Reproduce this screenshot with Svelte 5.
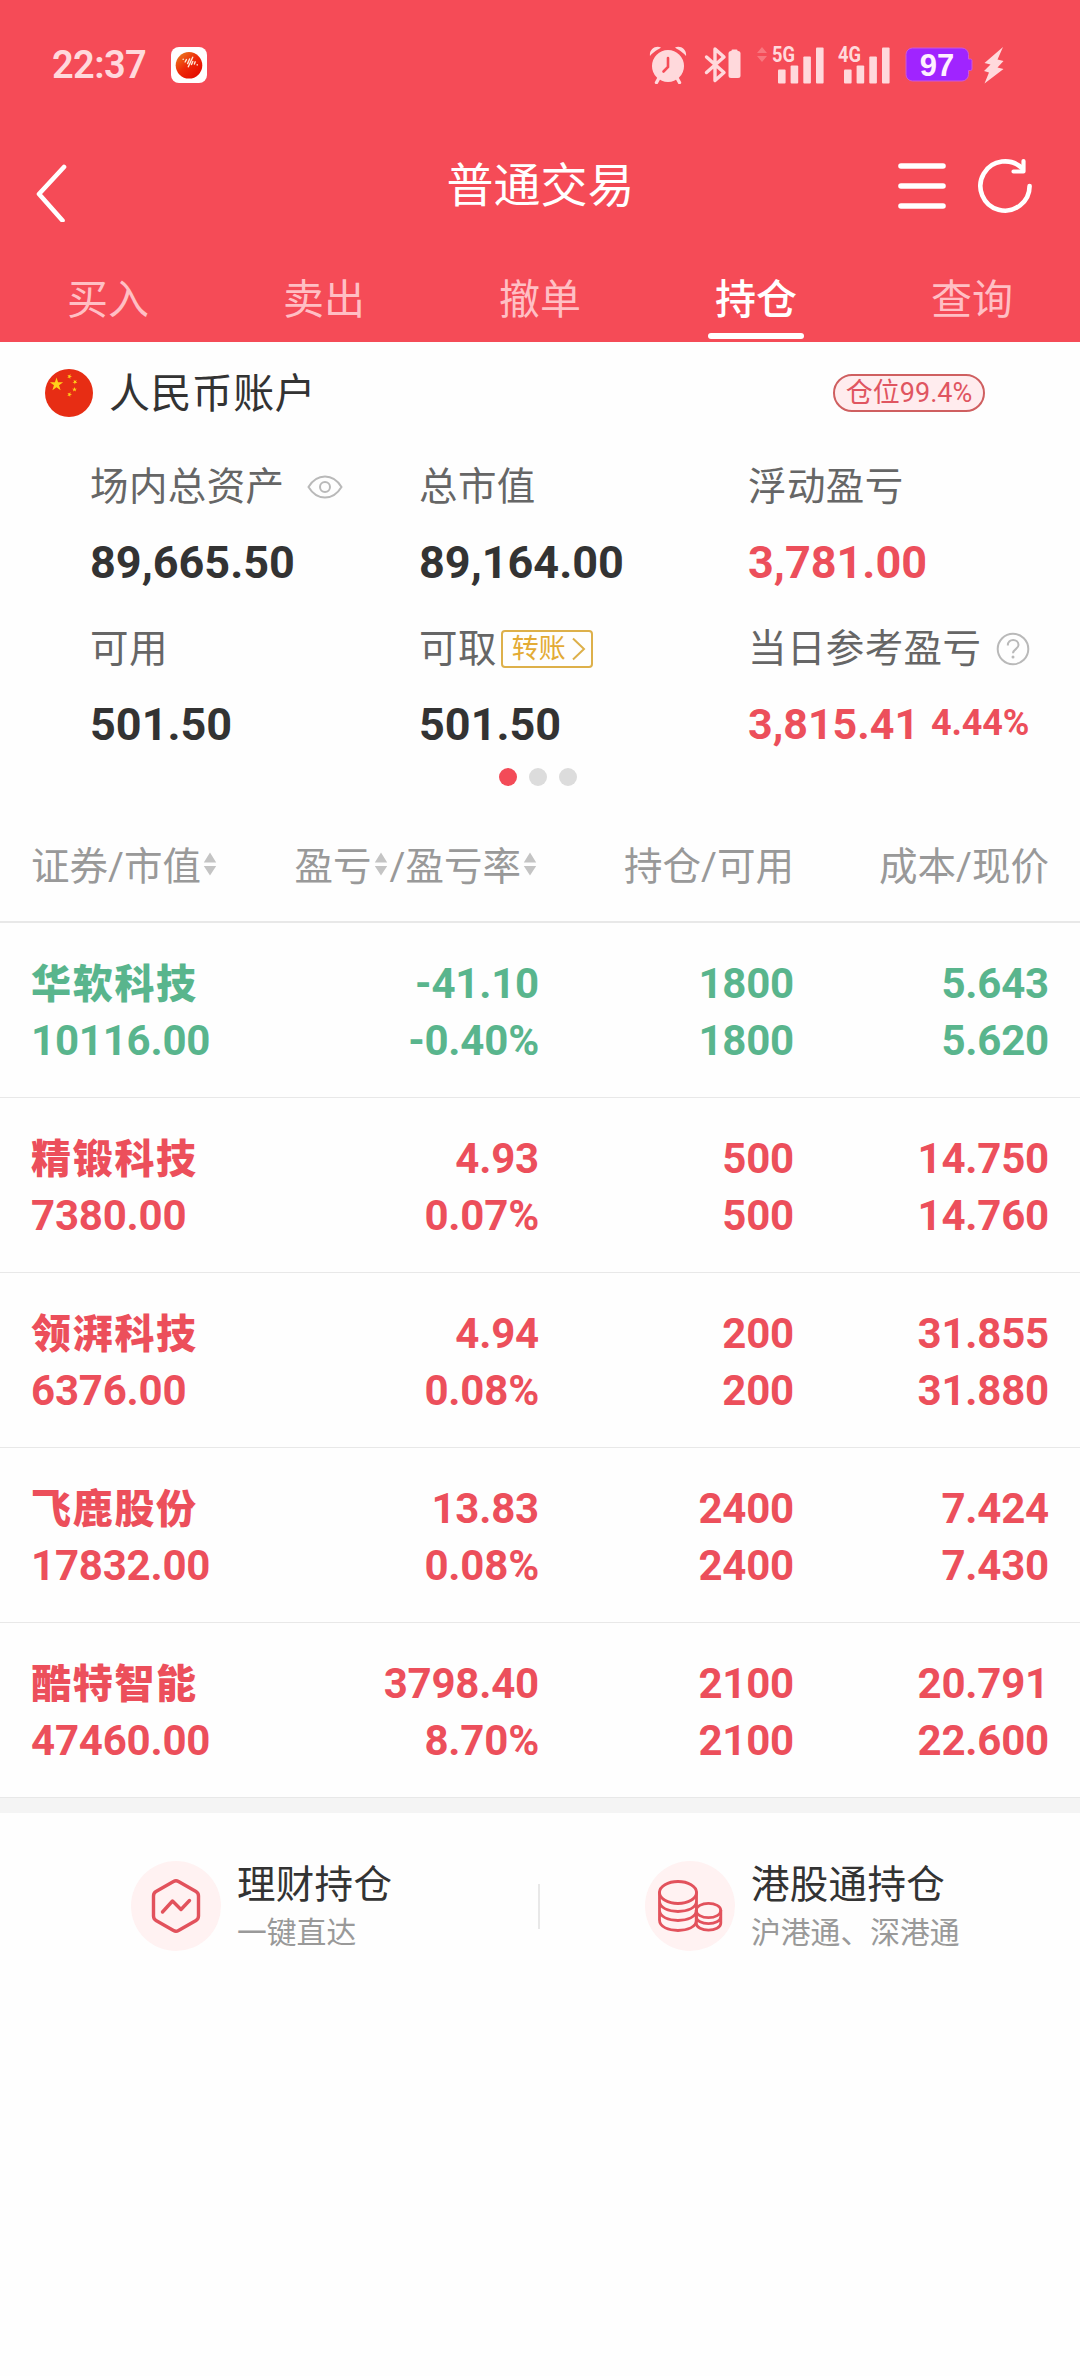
<script lang="ts">
  let activeTab = '持仓';
  const tabs = ['买入', '卖出', '撤单', '持仓', '查询'];

  const holdings = [
    { name: '华软科技', value: '10116.00', profit: '-41.10', rate: '-0.40%', amount: '1800', available: '1800', cost: '5.643', price: '5.620', down: true },
    { name: '精锻科技', value: '7380.00', profit: '4.93', rate: '0.07%', amount: '500', available: '500', cost: '14.750', price: '14.760', down: false },
    { name: '领湃科技', value: '6376.00', profit: '4.94', rate: '0.08%', amount: '200', available: '200', cost: '31.855', price: '31.880', down: false },
    { name: '飞鹿股份', value: '17832.00', profit: '13.83', rate: '0.08%', amount: '2400', available: '2400', cost: '7.424', price: '7.430', down: false },
    { name: '酷特智能', value: '47460.00', profit: '3798.40', rate: '8.70%', amount: '2100', available: '2100', cost: '20.791', price: '22.600', down: false }
  ];

  const star = '0,-1 0.225,-0.309 0.951,-0.309 0.363,0.118 0.588,0.809 0,0.382 -0.588,0.809 -0.363,0.118 -0.951,-0.309 -0.225,-0.309';
  const stars = [
    { x: 11.5, y: 15.5, size: 7, turn: 0 },
    { x: 24.5, y: 7.5, size: 2.6, turn: 20 },
    { x: 30, y: 13, size: 2.6, turn: 40 },
    { x: 29.5, y: 20.5, size: 2.6, turn: 0 },
    { x: 24.5, y: 25.5, size: 2.6, turn: 20 }
  ];
</script>

{#snippet sortIcon()}
  <svg class="sort" width="14" height="24" viewBox="0 0 14 24">
    <path d="M7 0.5 L13.2 10.5 H0.8 Z M7 23.5 L13.2 14 H0.8 Z" fill="#c4c4c4" />
  </svg>
{/snippet}

{#snippet signal(label: string)}
  <svg class="signal" width="52" height="46" viewBox="0 -4 52 46">
    <text x="0" y="16.4" font-size="22" font-weight="700" textLength="23" lengthAdjust="spacingAndGlyphs">{label}</text>
    <rect x="6" y="23.5" width="7.6" height="14" rx="1" />
    <rect x="18.6" y="19.5" width="7.6" height="18" rx="1" />
    <rect x="31.3" y="10.5" width="7.6" height="27" rx="1" />
    <rect x="44" y="1.5" width="7.6" height="36" rx="1" />
  </svg>
{/snippet}

<div class="page">
  <header>
    <div class="status">
      <span class="time">22:37</span>
      <svg class="app-icon" width="36" height="36" viewBox="0 0 36 36">
        <defs>
          <linearGradient id="ball" x1="0" y1="0" x2="0.8" y2="0.9">
            <stop offset="0" stop-color="#e98a22" />
            <stop offset="0.55" stop-color="#ee2a08" />
            <stop offset="1" stop-color="#e40d00" />
          </linearGradient>
        </defs>
        <rect width="36" height="36" rx="8" fill="#fff" />
        <circle cx="18" cy="18.3" r="13.3" fill="url(#ball)" />
        <path d="M12.2 12.2v.2 M15.4 12.6l-1.3 2.4 M18.6 12l-2 4.600 M21.7 10.2l-4.400 9.600 M21.800 14.4l-1.300 3.2 M24.200 14.800l-.8 2.2 M26.200 17.6v.4" stroke="#ffe9d8" stroke-width="1.400" stroke-linecap="round" fill="none" />
      </svg>

      <div class="indicators">
        <svg class="alarm" width="38" height="38" viewBox="0 0 38 38">
          <circle cx="19" cy="20" r="16" />
          <path d="M1 10 C0 4 6 -1 12 1.5 C10 3 4 6 1 10 Z M37 10 C38 4 32 -1 26 1.5 C28 3 34 6 37 10 Z" />
          <path d="M10 32 L7.5 36.5 M28 32 L30.5 36.5" class="line" stroke-width="3.4" />
          <path d="M19 12v9l-4.500 4.500" fill="none" stroke="#f54b57" stroke-width="2.6" stroke-linecap="round" />
        </svg>
        <svg class="bluetooth" width="38" height="38" viewBox="0 0 38 38">
          <path d="M2.500 11 L20 26.500 L11 34.500 V3 L20 11 L2.500 26.500" class="line" stroke-width="3.4" />
          <rect x="24.500" y="5" width="12" height="27" rx="2.500" />
          <rect x="27.500" y="3.500" width="6" height="4" rx="1" />
        </svg>
        <svg class="traffic" width="10" height="38" viewBox="0 0 10 38">
          <path d="M5 1 L10 7 H0 Z M5 16 L10 10 H0 Z" opacity="0.3" />
        </svg>
        {@render signal('5G')}
        <span class="second-sim">{@render signal('4G')}</span>
        <svg class="battery" width="68" height="36" viewBox="0 0 68 36">
          <path d="M7.500 1 H57 a6.500 6.500 0 0 1 6.500 6.500 V12 h2 a1.500 1.500 0 0 1 1.500 1.500 V22 a1.500 1.500 0 0 1 -1.500 1.500 h-2 V27.500 a6.500 6.500 0 0 1 -6.500 6.500 H7.500 a6.500 6.500 0 0 1 -6.500 -6.500 V7.500 a6.500 6.500 0 0 1 6.500 -6.500 Z" fill="#a024ff" stroke="#cf58d6" stroke-width="1" />
          <text class="level" x="32" y="28.500" text-anchor="middle">97</text>
        </svg>
        <svg class="bolt" width="21" height="38" viewBox="0 0 21 38">
          <path d="M20 1 L1.500 17 L7.500 18.500 L1 25 L6 26.500 L1.500 37.500 L20.500 23 L14.500 21.500 L20.500 15 L14.500 13.500 Z" />
        </svg>
      </div>
    </div>

    <nav class="bar">
      <svg class="back" width="32" height="72" viewBox="0 0 32 72">
        <path d="M28 17 L3 44 L26.500 70.500" fill="none" stroke="#fff" stroke-width="4.600" stroke-linecap="round" stroke-linejoin="round" />
      </svg>
      <h1>普通交易</h1>
      <div class="actions">
        <svg width="48" height="48" viewBox="0 0 48 48">
          <path d="M3 4 H45 M3 24 H45 M3 44 H45" stroke="#fff" stroke-width="5.600" stroke-linecap="round" />
        </svg>
        <svg width="56" height="56" viewBox="0 0 56 56">
          <path d="M52.600 28 A24.600 24.600 0 1 1 45.500 10.700" fill="none" stroke="#fff" stroke-width="4.600" stroke-linecap="round" />
          <path d="M46.500 3 V13.500 H36.500" fill="none" stroke="#fff" stroke-width="4.200" stroke-linecap="round" stroke-linejoin="round" />
        </svg>
      </div>
    </nav>

    <div class="tabs">
      {#each tabs as tab}
        <button class:active={tab === activeTab} on:click={() => (activeTab = tab)}>{tab}</button>
      {/each}
    </div>
  </header>

  <section class="account">
    <svg width="48" height="48" viewBox="0 0 48 48">
      <circle cx="24" cy="24" r="24" fill="#e72d14" />
      {#each stars as s}
        <polygon points={star} fill="#ffd21a" transform="translate({s.x} {s.y}) rotate({s.turn}) scale({s.size})" />
      {/each}
    </svg>
    <h2>人民币账户</h2>
    <span class="position">仓位99.4%</span>
  </section>

  <section class="assets">
    <div class="asset">
      <div class="label">
        场内总资产
        <svg class="eye" width="36" height="24" viewBox="0 0 36 24">
          <path d="M1.500 12 C10 -2 26 -2 34.500 12 C26 26 10 26 1.500 12 Z" />
          <circle cx="18" cy="12" r="5" />
        </svg>
      </div>
      <div class="value">89,665.50</div>
    </div>
    <div class="asset">
      <div class="label">总市值</div>
      <div class="value">89,164.00</div>
    </div>
    <div class="asset">
      <div class="label">浮动盈亏</div>
      <div class="value up">3,781.00</div>
    </div>
    <div class="asset">
      <div class="label">可用</div>
      <div class="value">501.50</div>
    </div>
    <div class="asset">
      <div class="label">
        可取
        <span class="transfer">
          转账
          <svg width="16" height="24" viewBox="0 0 16 24">
            <path d="M2 1.500 L13 12 L2 22.500" fill="none" stroke="#ddb04a" stroke-width="2" />
          </svg>
        </span>
      </div>
      <div class="value">501.50</div>
    </div>
    <div class="asset">
      <div class="label">
        当日参考盈亏
        <svg class="help" width="34" height="34" viewBox="0 0 34 34">
          <circle cx="17" cy="17" r="15.300" />
          <path d="M11.800 13.500 C11.800 6 22.500 6.500 22.500 13 C22.500 17 17 17.300 17 21.300" />
          <circle cx="17" cy="25" r="1.500" class="point" />
        </svg>
      </div>
      <div class="value up today">3,815.41 <small>4.44%</small></div>
    </div>
  </section>

  <div class="dots">
    <i class="on"></i>
    <i></i>
    <i></i>
  </div>

  <div class="row head">
    <div>证券/市值{@render sortIcon()}</div>
    <div>盈亏{@render sortIcon()}/盈亏率{@render sortIcon()}</div>
    <div>持仓/可用</div>
    <div>成本/现价</div>
  </div>

  {#each holdings as item}
    <div class="row item" class:down={item.down}>
      <div><b>{item.name}</b><span>{item.value}</span></div>
      <div><span>{item.profit}</span><span>{item.rate}</span></div>
      <div><span>{item.amount}</span><span>{item.available}</span></div>
      <div><span>{item.cost}</span><span>{item.price}</span></div>
    </div>
  {/each}

  <footer>
    <div class="entry">
      <svg width="90" height="90" viewBox="0 0 90 90">
        <circle cx="45" cy="45" r="45" fill="#fff2f2" />
        <path d="M42.500 20.500 Q45 19 47.500 20.500 L65 30.500 Q67.500 32 67.500 35 V55 Q67.500 58 65 59.500 L47.500 69.500 Q45 71 42.500 69.500 L25 59.500 Q22.500 58 22.500 55 V35 Q22.500 32 25 30.500 Z" />
        <path d="M31.500 51 L41.500 40 L50 48.500 L58.500 39.500" />
      </svg>
      <div>
        <p class="title">理财持仓</p>
        <p class="desc">一键直达</p>
      </div>
    </div>
    <div class="divider"></div>
    <div class="entry second">
      <svg class="coins" width="90" height="90" viewBox="0 0 90 90">
        <circle cx="45" cy="45" r="45" fill="#fff2f2" />
        <ellipse cx="33" cy="31.500" rx="18.500" ry="11" />
        <path d="M14.500 31.500 V59 C14.500 73 51.500 73 51.500 59 V31.500 M14.500 40 C14.500 54 51.500 54 51.500 40 M14.500 49 C14.500 63 51.500 63 51.500 49" />
        <ellipse cx="63.500" cy="49.500" rx="12.300" ry="7.200" />
        <path d="M51.200 49.500 V62 C51.200 71.500 75.800 71.500 75.800 62 V49.500 M51.200 55.500 C51.200 65 75.800 65 75.800 55.500" />
      </svg>
      <div>
        <p class="title">港股通持仓</p>
        <p class="desc">沪港通、深港通</p>
      </div>
    </div>
  </footer>
</div>

<style>
:global(body) {
  background: #fefefe;
}

.page {
  width: 1080px;
  min-height: 2376px;
  background: #fefefe;
  color: #333;
  font-family: Roboto, 'Noto Sans CJK SC', sans-serif;
  overflow: hidden;
}

svg {
  display: block;
  flex: none;
}

h1, h2, p {
  margin: 0;
  font-weight: 400;
}

header {
  height: 342px;
  background: #f54b57;
  color: #fff;
}

.status {
  height: 130px;
  display: flex;
  align-items: center;
  padding: 0 76px 0 52px;
  color: #ffd9dc;
}

.time {
  width: 119px;
  font-size: 38px;
  font-weight: 600;
  letter-spacing: -0.6px;
}

.indicators {
  display: flex;
  align-items: center;
  margin-left: auto;
  fill: #ffd9dc;
}

.indicators .line {
  fill: none;
  stroke: #ffd9dc;
  stroke-linecap: round;
  stroke-linejoin: round;
}

.bluetooth {
  margin-left: 17px;
}

.traffic {
  margin: 0 5px 0 15px;
}

.signal {
  overflow: visible;
}

.second-sim {
  margin-left: 14px;
}

.battery {
  margin-left: 15px;
}

.level {
  font: 700 31px 'Liberation Sans', sans-serif;
  fill: #fff0ff;
}

.bolt {
  margin-left: 10px;
}

.bar {
  height: 112px;
  display: grid;
  grid-template-columns: 1fr auto 1fr;
  align-items: center;
  padding: 0 47px 0 36px;
}

h1 {
  margin-left: 12px;
  font-size: 47px;
  line-height: 60px;
}

.actions {
  display: flex;
  align-items: center;
  justify-content: flex-end;
  gap: 31px;
}

.tabs {
  height: 100px;
  display: flex;
}

.tabs button {
  flex: 1;
  display: flex;
  flex-direction: column;
  align-items: center;
  padding: 28px 0 0;
  border: none;
  background: none;
  color: #ffbfc4;
  font-family: inherit;
  font-size: 41px;
  line-height: 60px;
}

.tabs .active {
  color: #fff;
  font-weight: 500;
}

.tabs .active::after {
  content: '';
  width: 96px;
  height: 6px;
  margin-top: 3px;
  border-radius: 3px;
  background: #fff;
}

.account {
  height: 102px;
  display: flex;
  align-items: center;
  padding: 0 95px 0 45px;
}

h2 {
  margin-left: 16px;
  padding-top: 2px;
  font-size: 41px;
  line-height: 60px;
  letter-spacing: 0.4px;
}

.position {
  box-sizing: border-box;
  width: 152px;
  height: 38px;
  margin-left: auto;
  border: 2px solid #cf5f60;
  border-radius: 19px;
  background: #ffecee;
  color: #e05560;
  font-size: 27px;
  line-height: 35px;
  text-align: center;
}

.assets {
  display: grid;
  grid-template-columns: 329px 329px 1fr;
  row-gap: 12px;
  padding: 6px 0 0 90px;
}

.label {
  display: flex;
  align-items: center;
  height: 73px;
  padding-bottom: 1px;
  color: #666;
  font-size: 38.5px;
  letter-spacing: 0.4px;
  line-height: 56px;
  white-space: nowrap;
}

.eye, .help {
  fill: none;
  stroke: #b9b9b9;
  stroke-width: 2;
}

.eye {
  margin-left: 22px;
}

.help {
  margin-left: 15px;
}

.help .point {
  fill: #b9b9b9;
  stroke: none;
}

.transfer {
  box-sizing: border-box;
  display: flex;
  align-items: center;
  gap: 5px;
  width: 92px;
  height: 38px;
  margin-left: 4px;
  padding-left: 9px;
  border: 2px solid #ddb04a;
  border-radius: 4px;
  color: #e3ab35;
  font-size: 27px;
  letter-spacing: 0;
}

.value {
  height: 76px;
  padding-top: 1px;
  box-sizing: border-box;
  font-size: 45px;
  font-weight: 700;
  line-height: 76px;
  white-space: nowrap;
}

.up {
  color: #ec4f5b;
}

.today {
  display: flex;
  align-items: center;
  gap: 12px;
  padding-top: 0;
  font-size: 43px;
}

.today small {
  margin-top: -2px;
  font-size: 36px;
  letter-spacing: -0.2px;
}

.dots {
  display: flex;
  justify-content: center;
  gap: 12px;
  margin-top: 6px;
  padding-right: 4px;
}

.dots i {
  width: 18px;
  height: 18px;
  border-radius: 50%;
  background: #dcdcdc;
}

.dots .on {
  background: #f34b58;
}

.row {
  display: grid;
  grid-template-columns: 230px 278px 255px 255px;
  padding: 0 31px;
  text-align: right;
}

.row div:first-child {
  text-align: left;
}

.head {
  height: 110px;
  margin-top: 25px;
  border-bottom: 2px solid #e8e8e8;
  color: #999;
  font-size: 38.5px;
  line-height: 112px;
  white-space: nowrap;
}

.sort {
  display: inline-block;
  margin: 0 2px;
  vertical-align: 4px;
}

.item {
  box-sizing: border-box;
  height: 175px;
  padding-top: 32px;
  border-bottom: 1px solid #e8e8e8;
  color: #ec4f5b;
  font-size: 42px;
  font-weight: 700;
  line-height: 57px;
  letter-spacing: -0.2px;
}

.item b, .item span {
  display: block;
  height: 57px;
}

.item b {
  font-size: 40px;
  letter-spacing: 1.7px;
  line-height: 59px;
}

.down {
  color: #59b58d;
}

footer {
  display: flex;
  align-items: center;
  padding: 44px 0 0 131px;
  border-top: 15px solid #f4f4f4;
}

.entry {
  display: flex;
  align-items: center;
  gap: 16px;
  width: 407px;
}

.entry path, .entry ellipse {
  fill: none;
  stroke: #e2525c;
  stroke-width: 3.4;
  stroke-linecap: round;
  stroke-linejoin: round;
}

.entry .coins path, .entry .coins ellipse {
  stroke-width: 2.8;
}

.divider {
  width: 2px;
  height: 45px;
  background: #e8e8e8;
}

.second {
  margin-left: 105px;
}

.title {
  padding-top: 2px;
  font-size: 38.5px;
  line-height: 52px;
  letter-spacing: 0.3px;
}

.desc {
  color: #999;
  font-size: 29.8px;
  line-height: 44px;
}
</style>
